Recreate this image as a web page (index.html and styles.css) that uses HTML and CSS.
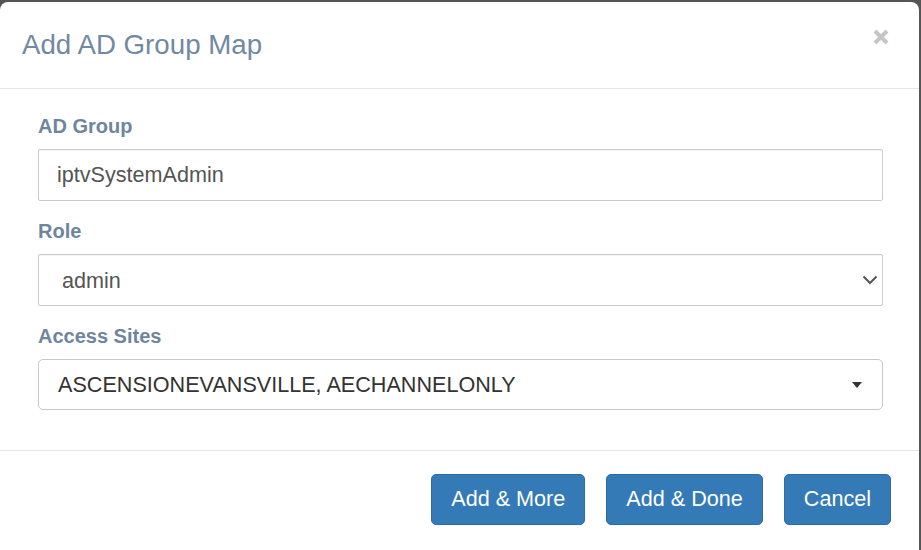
FILE: index.html
```html
<!DOCTYPE html>
<html>
<head>
<meta charset="utf-8">
<title>Add AD Group Map</title>
<link rel="stylesheet" href="styles.css">
</head>
<body>
<div class="modal">
  <div class="modal-header">
    <h4 class="modal-title">Add AD Group Map</h4>
    <button class="close" type="button" aria-label="Close">
      <svg width="16" height="16" viewBox="0 0 16 16"><path d="M2 2 L14 14 M14 2 L2 14" stroke="#c6c6c6" stroke-width="4" fill="none"/></svg>
    </button>
  </div>
  <div class="modal-body">
    <div class="form-group">
      <label class="label">AD Group</label>
      <input class="form-control" type="text" value="iptvSystemAdmin">
    </div>
    <div class="form-group">
      <label class="label">Role</label>
      <div class="select-wrap">
        <select class="form-control select">
          <option>admin</option>
        </select>
        <svg class="chevron" width="16" height="10" viewBox="0 0 16 10"><path d="M1.5 1.5 L8 8 L14.5 1.5" stroke="#555" stroke-width="2" fill="none"/></svg>
      </div>
    </div>
    <div class="form-group last">
      <label class="label">Access Sites</label>
      <div class="select2">
        <span class="select2-text">ASCENSIONEVANSVILLE, AECHANNELONLY</span>
        <span class="caret"></span>
      </div>
    </div>
  </div>
  <div class="modal-footer">
    <button class="btn" type="button">Add &amp; More</button>
    <button class="btn" type="button">Add &amp; Done</button>
    <button class="btn" type="button">Cancel</button>
  </div>
</div>
</body>
</html>
```
FILE: styles.css
```css
html, body {
  margin: 0;
  padding: 0;
  height: 100%;
  overflow: hidden;
}
body {
  background: #555;
  font-family: "Liberation Sans", Arial, sans-serif;
}
.modal {
  margin-top: 2px;
  width: 919px;
  height: 560px;
  background: #fff;
  border-radius: 8px 8px 0 0;
}
.modal-header {
  display: flex;
  align-items: flex-start;
  justify-content: space-between;
  padding: 28px 30px 28px 22px;
  border-bottom: 1px solid #e5e5e5;
}
.modal-title {
  margin: 0;
  font-size: 27.7px;
  line-height: 30px;
  font-weight: normal;
  color: #7189a2;
}
.close {
  border: 0;
  background: none;
  padding: 0;
  margin-top: -1px;
  width: 16px;
  height: 16px;
  cursor: pointer;
}
.close svg {
  display: block;
}
.modal-body {
  padding: 23px 36px 40px 38px;
}
.form-group {
  display: flex;
  flex-direction: column;
  margin-bottom: 16px;
}
.form-group.last {
  margin-bottom: 0;
}
.label {
  font-size: 20px;
  line-height: 28px;
  font-weight: bold;
  color: #6d869e;
  margin-bottom: 9px;
}
.form-control {
  box-sizing: border-box;
  width: 100%;
  height: 52px;
  margin: 0;
  padding: 0 18px;
  border: 1px solid #ccc;
  border-radius: 2px;
  font-family: "Liberation Sans", Arial, sans-serif;
  font-size: 21.6px;
  color: #555;
  background: #fff;
  box-shadow: inset 0 1px 1px rgba(0,0,0,.05);
  outline: none;
}
.select-wrap {
  position: relative;
}
.select {
  -webkit-appearance: none;
  appearance: none;
  padding-left: 23px;
  display: block;
}
.chevron {
  position: absolute;
  right: 5px;
  top: 21px;
  pointer-events: none;
}
.select2 {
  box-sizing: border-box;
  height: 51px;
  border: 1px solid #c8c8c8;
  border-radius: 5px;
  display: flex;
  align-items: center;
  justify-content: space-between;
  padding: 0 20px 0 19px;
}
.select2-text {
  font-size: 21.6px;
  color: #333;
}
.caret {
  width: 0;
  height: 0;
  border-left: 5px solid transparent;
  border-right: 5px solid transparent;
  border-top: 6px solid #333;
  margin-top: 1px;
}
.modal-footer {
  border-top: 1px solid #e5e5e5;
  display: flex;
  justify-content: flex-end;
  gap: 21px;
  padding: 23px 28px 0 0;
}
.btn {
  box-sizing: border-box;
  height: 51px;
  padding: 0 19px;
  border: 1px solid #2e6da4;
  border-radius: 5px;
  background: #337ab7;
  color: #fff;
  font-family: "Liberation Sans", Arial, sans-serif;
  font-size: 21.6px;
  line-height: 1;
  padding-bottom: 2px;
  cursor: pointer;
}
```
